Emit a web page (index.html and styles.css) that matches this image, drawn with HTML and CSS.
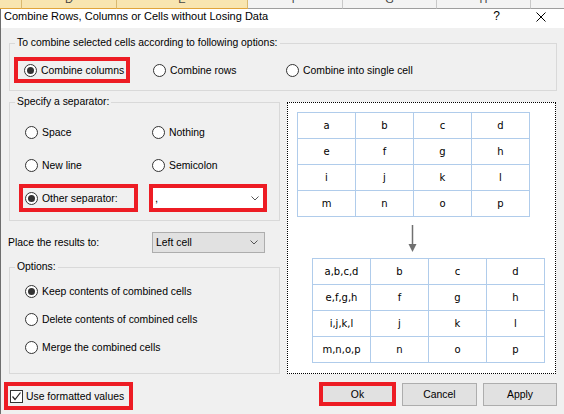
FILE: index.html
```html
<!DOCTYPE html>
<html>
<head>
<meta charset="utf-8">
<title>Combine Rows, Columns or Cells without Losing Data</title>
<link rel="stylesheet" href="styles.css">
</head>
<body>
<div class="sheet-strip">
  <div class="col sel w-c"></div>
  <div class="col sel w-d"><span>D</span></div>
  <div class="col sel w-e"><span>E</span></div>
  <div class="col w-f"><span>F</span></div>
  <div class="col w-g"><span>G</span></div>
  <div class="col w-h"><span>H</span></div>
  <div class="col w-rest"></div>
</div>
<div class="dialog">
  <div class="titlebar">
    <span class="title">Combine Rows, Columns or Cells without Losing Data</span>
    <span class="help">?</span>
    <svg class="close" width="10" height="10" viewBox="0 0 10 10"><path d="M0.5 0.5 L9.5 9.5 M9.5 0.5 L0.5 9.5" stroke="#000" stroke-width="1" fill="none"/></svg>
  </div>
  <div class="content">
    <div class="group group-mode">
      <div class="legend">To combine selected cells according to following options:</div>
      <div class="mode-row">
        <div class="opt hl hl-mode"><span class="radio"><span class="dot"></span></span><span>Combine columns</span></div>
        <div class="opt"><span class="radio"></span><span>Combine rows</span></div>
        <div class="opt"><span class="radio"></span><span>Combine into single cell</span></div>
      </div>
    </div>
    <div class="main">
      <div class="left">
        <div class="group group-sep">
          <div class="legend">Specify a separator:</div>
          <div class="sep-grid">
            <div class="opt c1"><span class="radio"></span><span>Space</span></div>
            <div class="opt c2"><span class="radio"></span><span>Nothing</span></div>
            <div class="opt c1"><span class="radio"></span><span>New line</span></div>
            <div class="opt c2"><span class="radio"></span><span>Semicolon</span></div>
            <div class="opt hl hl-other"><span class="radio"><span class="dot"></span></span><span>Other separator:</span></div>
            <div class="hl hl-combo"><span class="combo-text">,</span><svg class="chev" width="8" height="5" viewBox="0 0 8 5"><path d="M0.5 0.5 L4 4 L7.5 0.5" stroke="#555" stroke-width="1" fill="none"/></svg></div>
          </div>
        </div>
        <div class="place-row">
          <span class="place-label">Place the results to:</span>
          <div class="select"><span>Left cell</span><svg class="chev" width="8" height="5" viewBox="0 0 8 5"><path d="M0.5 0.5 L4 4 L7.5 0.5" stroke="#555" stroke-width="1" fill="none"/></svg></div>
        </div>
        <div class="group group-opts">
          <div class="legend">Options:</div>
          <div class="opt-list">
            <div class="opt"><span class="radio"><span class="dot"></span></span><span>Keep contents of combined cells</span></div>
            <div class="opt"><span class="radio"></span><span>Delete contents of combined cells</span></div>
            <div class="opt"><span class="radio"></span><span>Merge the combined cells</span></div>
          </div>
        </div>
      </div>
      <div class="preview">
        <div class="grid-table">
          <div>a</div><div>b</div><div>c</div><div>d</div>
          <div>e</div><div>f</div><div>g</div><div>h</div>
          <div>i</div><div>j</div><div>k</div><div>l</div>
          <div>m</div><div>n</div><div>o</div><div>p</div>
        </div>
        <div class="arrow">
          <svg width="9" height="27" viewBox="0 0 9 27"><path d="M4.5 0 L4.5 20" stroke="#707070" stroke-width="1.5"/><path d="M0.5 19 L8.5 19 L4.5 27 Z" fill="#707070"/></svg>
        </div>
        <div class="grid-table result">
          <div>a,b,c,d</div><div>b</div><div>c</div><div>d</div>
          <div>e,f,g,h</div><div>f</div><div>g</div><div>h</div>
          <div>i,j,k,l</div><div>j</div><div>k</div><div>l</div>
          <div>m,n,o,p</div><div>n</div><div>o</div><div>p</div>
        </div>
      </div>
    </div>
    <div class="footer">
      <div class="hl hl-check">
        <span class="checkbox"><svg width="11" height="11" viewBox="0 0 11 11"><path d="M1.5 5.5 L4 8.5 L9.5 1.5" stroke="#222" stroke-width="1.2" fill="none"/></svg></span>
        <span>Use formatted values</span>
      </div>
      <div class="buttons">
        <div class="btn btn-ok">Ok</div>
        <div class="btn btn-cancel">Cancel</div>
        <div class="btn btn-apply">Apply</div>
      </div>
    </div>
  </div>
</div>
</body>
</html>
```

FILE: styles.css
```css
* { box-sizing: border-box; }
html, body { margin: 0; padding: 0; }
body {
  width: 564px;
  height: 414px;
  overflow: hidden;
  background: #f0f0f0;
  font-family: "Liberation Sans", Arial, sans-serif;
  font-size: 10.4px;
  color: #000;
}

/* Excel column header strip */
.sheet-strip { display: flex; height: 9px; overflow: hidden; background: #f3f3f3; }
.col {
  flex: 0 0 auto;
  height: 9px;
  border-right: 1px solid #c8c8c8;
  border-bottom: 1px solid #9e9e9e;
  text-align: center;
  font-size: 11px;
  line-height: 12px;
  color: #444;
  overflow: hidden;
}
.col span { display: block; margin-top: -7px; }
.col.sel { background: #f8e5b0; border-bottom-color: #e0a43a; border-right-color: #d9b96f; }
.w-c { width: 22px; }
.w-d { width: 95px; }
.w-e { width: 131px; }
.w-f { width: 95px; }
.w-g { width: 94px; }
.w-h { width: 94px; }
.w-rest { flex: 1 1 auto; border-right: none; }

/* Dialog */
.dialog { border-left: 1px solid #6e6e6e; height: 405px; }
.titlebar {
  display: flex;
  align-items: flex-start;
  height: 19px;
  background: #fff;
  padding-left: 3px;
  font-size: 11px;
  line-height: 15px;
}
.help { margin-left: auto; font-size: 12px; }
.close { margin-left: 36px; margin-right: 18px; margin-top: 3px; }

.content { padding: 15px 7px 0 8px; }

.group { border: 1px solid #d9d9d9; }
.legend {
  width: max-content;
  margin: -8px 0 0 5px;
  padding: 0 2px;
  background: #f0f0f0;
  line-height: 14px;
}

.opt { display: flex; align-items: center; gap: 4px; }
.radio {
  flex: 0 0 13px;
  width: 13px;
  height: 13px;
  border: 1px solid #333;
  border-radius: 50%;
  background: #fff;
  display: flex;
  align-items: center;
  justify-content: center;
}
.dot { width: 7px; height: 7px; border-radius: 50%; background: #333; }

.hl { border: 4px solid #ed1c24; }

/* Mode group */
.group-mode { padding-bottom: 7px; }
.mode-row {
  display: grid;
  grid-template-columns: 139px 133px auto;
  margin: 7px 0 0 4px;
  height: 26px;
}
.mode-row .opt { height: 26px; }
.hl-mode { width: 116px; padding-left: 6px; }

/* Main area */
.main {
  display: grid;
  grid-template-columns: 271px 269px;
  column-gap: 7px;
  margin-top: 11px;
  align-items: start;
}

.group-sep { padding-bottom: 8px; }
.sep-grid {
  display: grid;
  grid-template-columns: 130px 118px;
  grid-auto-rows: 28px;
  row-gap: 5px;
  margin: 9px 0 0 9px;
}
.sep-grid .c1 { padding-left: 6px; }
.sep-grid .c2 { padding-left: 3px; }
.hl-other { width: 119px; padding-left: 2px; }
.hl-combo {
  width: 118px;
  background: #fff;
  display: flex;
  align-items: center;
  justify-content: space-between;
  padding: 0 4px 0 2px;
}
.combo-text { font-size: 11px; }

.place-row { display: flex; align-items: center; height: 21px; margin-top: 11px; }
.place-label { flex: 0 0 144px; margin-left: -1px; }
.select {
  width: 113px;
  height: 21px;
  background: #e1e1e1;
  border: 1px solid #adadad;
  display: flex;
  align-items: center;
  justify-content: space-between;
  padding: 0 6px 0 3px;
}

.group-opts { margin-top: 14px; padding-bottom: 12px; }
.opt-list { margin: 3px 0 0 15px; display: grid; grid-auto-rows: 28px; }

/* Preview */
.preview {
  height: 272px;
  border: 1px dotted #000;
  background: #fff;
  padding: 9px 0 0 9px;
}
.grid-table {
  display: grid;
  grid-template-columns: repeat(4, 57px);
  grid-auto-rows: 25px;
  gap: 1px;
  padding: 1px;
  width: 233px;
  background: #b0cceb;
  font-family: "DejaVu Sans", Verdana, sans-serif;
  font-size: 10px;
}
.grid-table div {
  background: #fff;
  text-align: center;
  line-height: 25px;
}
.arrow { width: 230px; height: 27px; margin-top: 8px; display: flex; justify-content: center; }
.grid-table.result { margin: 6px 0 0 15px; }

/* Footer */
.footer { display: flex; align-items: flex-start; margin: 8px 0 0 -5px; }
.hl-check {
  height: 28px;
  display: flex;
  align-items: center;
  gap: 3px;
  padding: 0 5px 0 2px;
}
.checkbox {
  width: 13px;
  height: 13px;
  border: 1px solid #333;
  background: #fff;
  display: flex;
}
.buttons { margin-left: auto; margin-top: 1px; display: flex; gap: 6px; }
.btn {
  height: 23px;
  background: #e1e1e1;
  border: 1px solid #adadad;
  display: flex;
  align-items: center;
  justify-content: center;
}
.btn-ok { width: 77px; height: 24px; border: 4px solid #ed1c24; margin-top: -1px; }
.btn-cancel { width: 75px; }
.btn-apply { width: 74px; }
```
